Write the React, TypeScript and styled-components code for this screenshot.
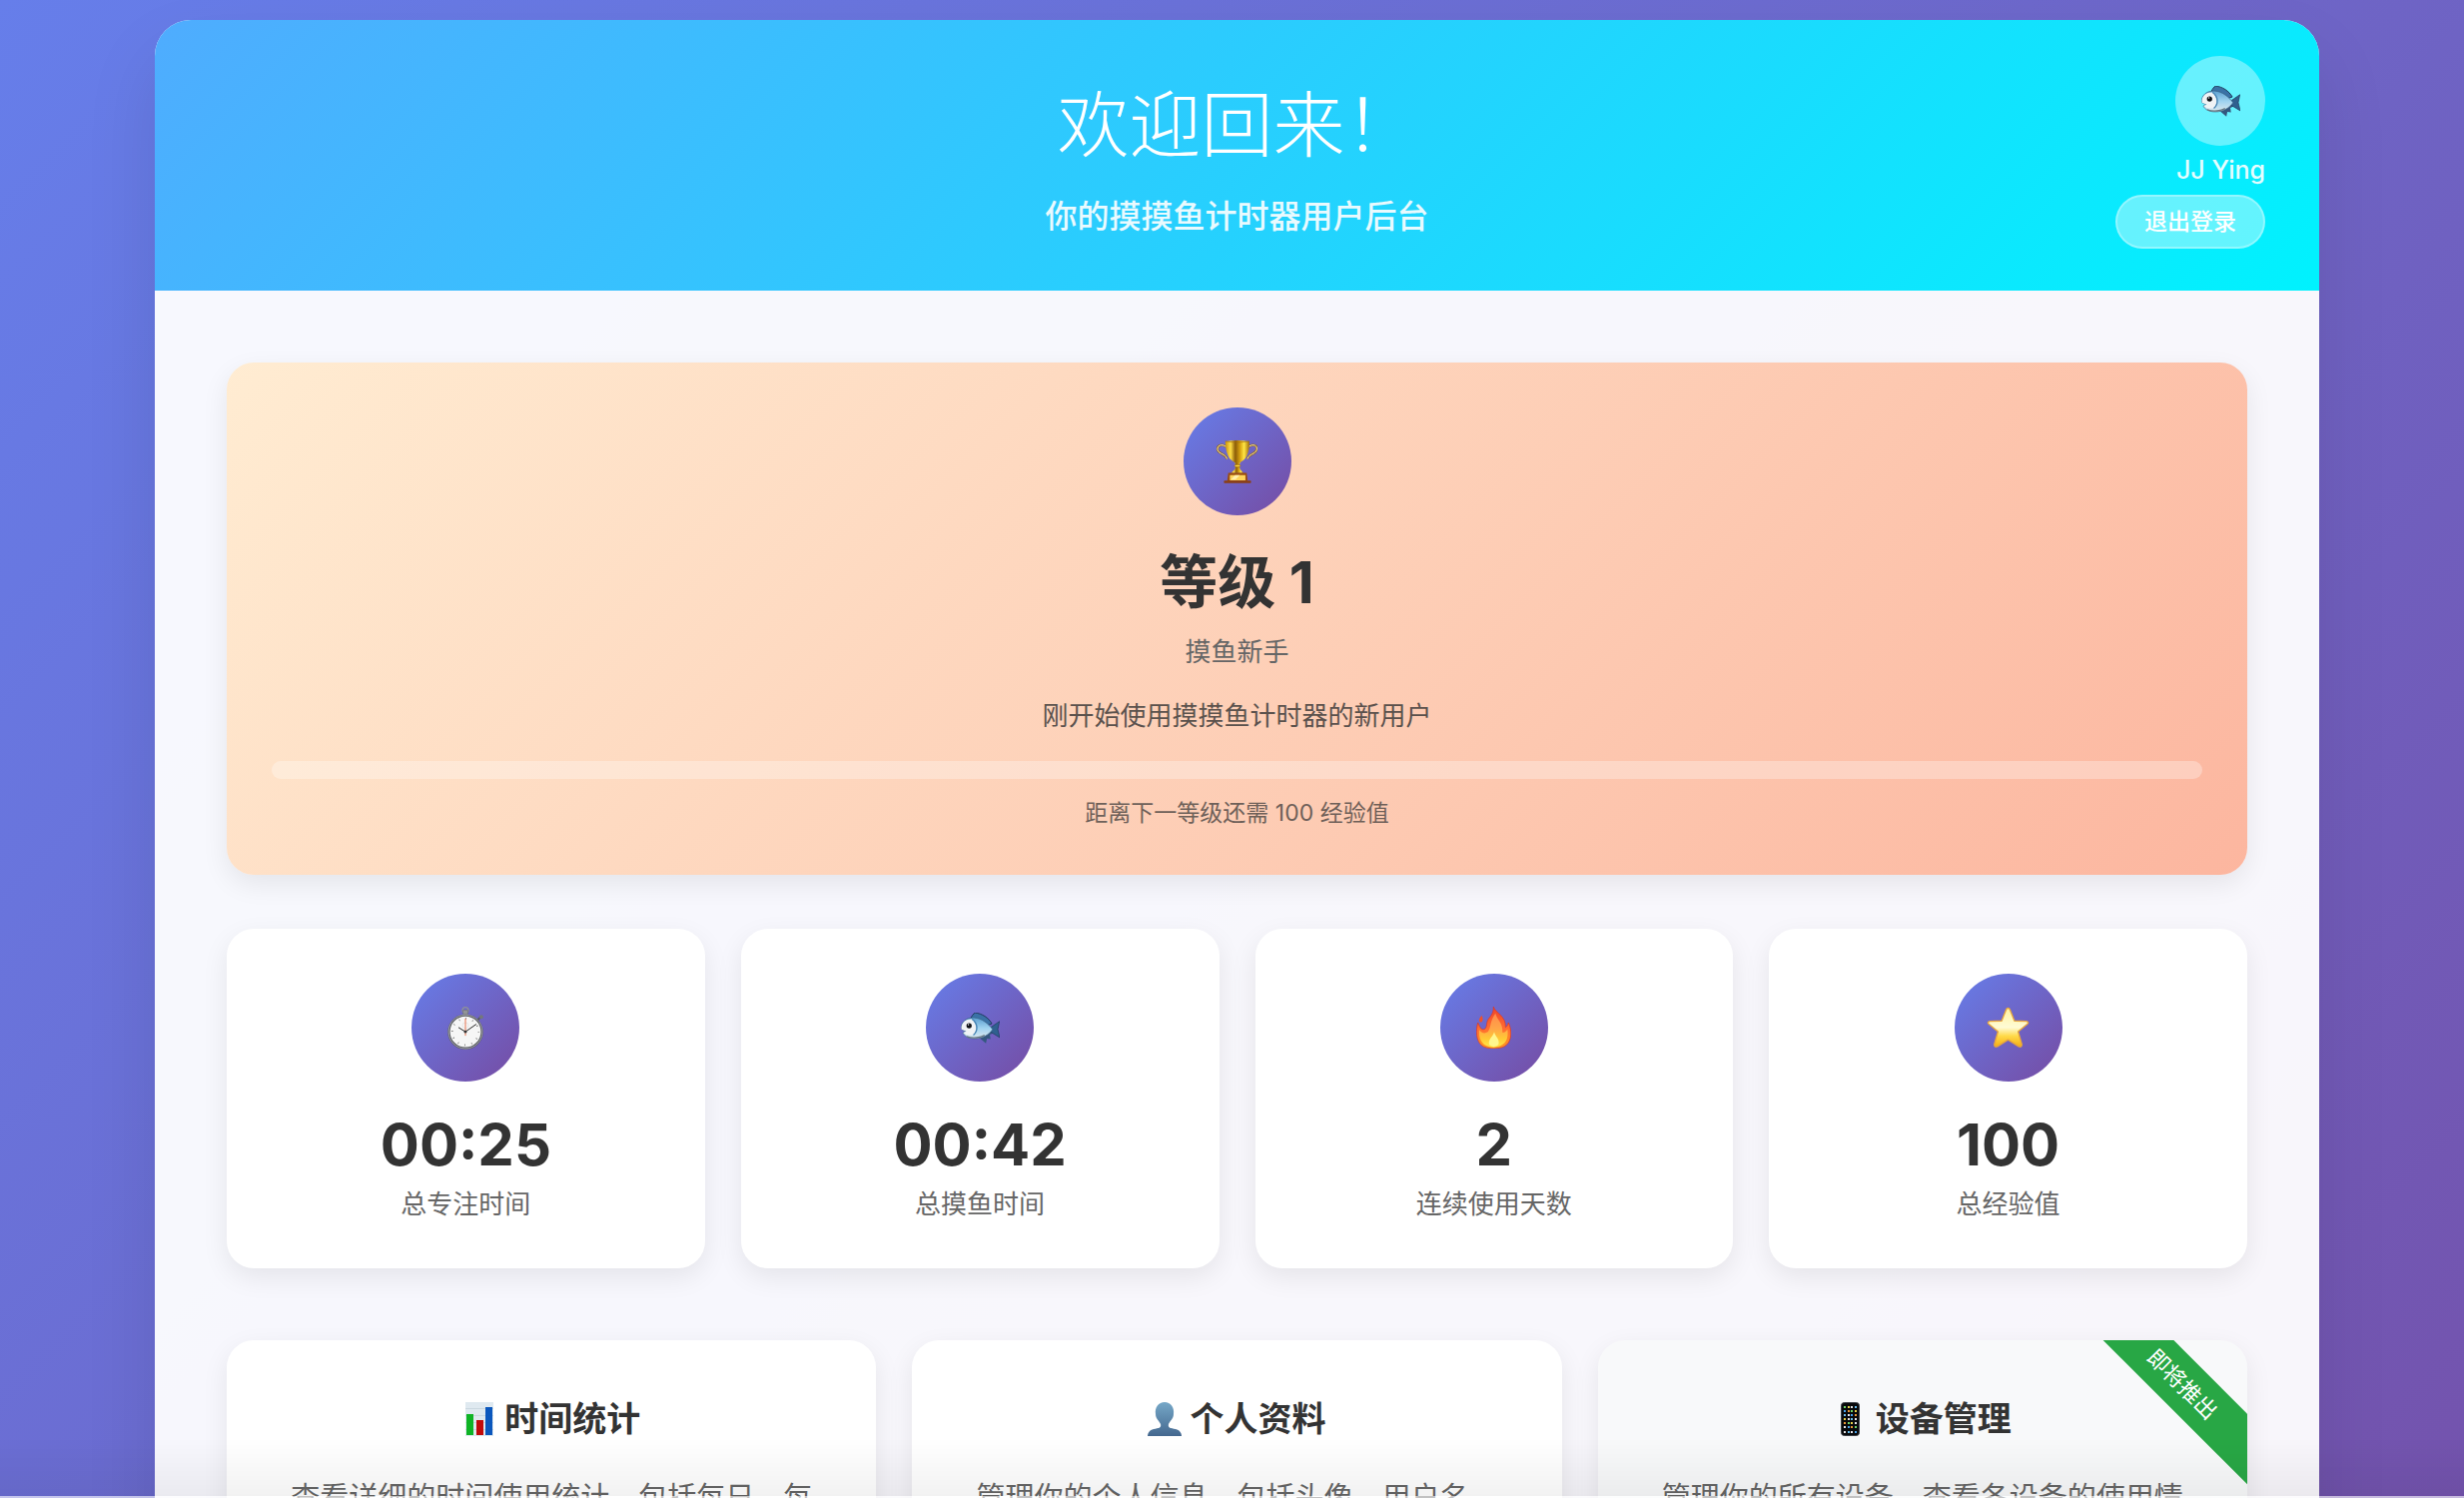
import React from "react";
import styled, { createGlobalStyle } from "styled-components";

const GlobalStyle = createGlobalStyle`
  * { box-sizing: border-box; margin: 0; padding: 0; }
  body {
    font-family: Inter, "Noto Sans CJK SC", sans-serif;
    color: #333;
  }
`;

const Page = styled.div`
  height: 100vh;
  overflow: hidden;
  padding: 20px 145px 0 155px;
  background: linear-gradient(135deg, #667eea 0%, #764ba2 100%) 0 0 / 100% 150vh no-repeat;
`;

const Container = styled.main`
  border-radius: 36px;
  overflow: hidden;
  background: rgba(255, 255, 255, 0.95);
  box-shadow: 0 36px 72px rgba(0, 0, 0, 0.1);
`;

const Header = styled.header`
  display: grid;
  grid-template-columns: 1fr auto 1fr;
  align-items: start;
  padding: 36px 54px;
  background: linear-gradient(135deg, #4facfe 0%, #00f2fe 100%);
  color: #fff;
`;

const Welcome = styled.div`
  grid-column: 2;
  display: flex;
  flex-direction: column;
  gap: 18px;
  padding: 19px 0 14px;
  text-align: center;
`;

const WelcomeTitle = styled.h1`
  font-size: 72px;
  line-height: 100px;
  font-weight: 200;
`;

const WelcomeText = styled.p`
  font-size: 32px;
  line-height: 48px;
  font-weight: 500;
  opacity: 0.9;
`;

const UserPanel = styled.div`
  display: flex;
  flex-direction: column;
  align-items: flex-end;
  gap: 9px;
`;

const Avatar = styled.div`
  display: grid;
  place-items: center;
  width: 90px;
  height: 90px;
  border-radius: 50%;
  background: rgba(255, 255, 255, 0.38);
`;

const UserName = styled.span`
  font-size: 25px;
  line-height: 31px;
  font-weight: 500;
  opacity: 0.9;
`;

const LogoutButton = styled.button`
  height: 54px;
  padding: 0 27px;
  border: 2px solid rgba(255, 255, 255, 0.3);
  border-radius: 27px;
  background: rgba(255, 255, 255, 0.38);
  color: #fff;
  font: inherit;
  font-size: 23px;
  line-height: 34px;
  font-weight: 500;
`;

const Content = styled.div`
  padding: 72px;
`;

const LevelCard = styled.section`
  display: flex;
  flex-direction: column;
  align-items: center;
  padding: 45px;
  margin-bottom: 54px;
  border-radius: 27px;
  background: linear-gradient(135deg, #ffecd2 0%, #fcb69f 100%);
  box-shadow: 0 9px 27px rgba(0, 0, 0, 0.08);
`;

const IconCircle = styled.div`
  display: grid;
  place-items: center;
  width: 108px;
  height: 108px;
  margin-bottom: 27px;
  border-radius: 50%;
  background: linear-gradient(135deg, #667eea 0%, #764ba2 100%);
`;

const LevelTitle = styled.h2`
  font-size: 58px;
  line-height: 80px;
  margin-bottom: 11px;
`;

const Label = styled.p`
  font-size: 26px;
  line-height: 38px;
  color: #666;
`;

const LevelDescription = styled.p`
  margin: 26px 0;
  font-size: 26px;
  line-height: 38px;
  opacity: 0.8;
`;

const LevelProgress = styled.div`
  width: 100%;
  height: 18px;
  margin-bottom: 17px;
  border-radius: 9px;
  background: rgba(255, 255, 255, 0.3);
`;

const LevelHint = styled.p`
  font-size: 23px;
  line-height: 34px;
  opacity: 0.7;
`;

const StatGrid = styled.section`
  display: grid;
  grid-template-columns: repeat(4, 1fr);
  gap: 36px;
  margin-bottom: 72px;
`;

const StatCard = styled.article`
  display: flex;
  flex-direction: column;
  align-items: center;
  padding: 45px;
  border-radius: 27px;
  background: #fff;
  box-shadow: 0 9px 27px rgba(0, 0, 0, 0.08);
`;

const StatValue = styled.p`
  font-size: 58px;
  line-height: 72px;
  font-weight: 700;
  margin-bottom: 5px;
`;

const FeatureGrid = styled.section`
  display: grid;
  grid-template-columns: repeat(3, 1fr);
  gap: 36px;
`;

const FeatureCard = styled.article<{ $muted?: boolean }>`
  position: relative;
  overflow: hidden;
  padding: 54px;
  border-radius: 27px;
  text-align: center;
  background: ${(p) => (p.$muted ? "#f8f9fa" : "#fff")};
  box-shadow: 0 9px 27px rgba(0, 0, 0, 0.08);
`;

const FeatureTitle = styled.h3`
  display: flex;
  justify-content: center;
  align-items: center;
  gap: 8px;
  margin-bottom: 27px;
  font-size: 34px;
  line-height: 50px;
  font-weight: 600;
`;

const TitleIcon = styled.span`
  display: grid;
  place-items: center;
  width: 34px;
  height: 34px;
`;

const FeatureText = styled.p`
  font-size: 29px;
  line-height: 54px;
  color: #666;
`;

const Ribbon = styled.span`
  position: absolute;
  top: 19px;
  right: -60px;
  width: 250px;
  height: 50px;
  background: #28a745;
  color: #fff;
  font-size: 22px;
  line-height: 50px;
  transform: rotate(45deg);
`;

const BottomFade = styled.div`
  position: fixed;
  left: 0;
  right: 0;
  bottom: 0;
  height: 60px;
  border-bottom: 2px solid rgba(255, 255, 255, 0.6);
  background: linear-gradient(rgba(0, 0, 0, 0), rgba(0, 0, 0, 0.05));
  pointer-events: none;
`;

const Fish = () => (
  <svg width="39" height="31" viewBox="0 0 118 93" aria-hidden="true">
    <defs>
      <linearGradient id="fishBody" x1="0" y1="0" x2="0" y2="1">
        <stop offset="0" stopColor="#5b9fd0" />
        <stop offset="0.5" stopColor="#9fd3f0" />
        <stop offset="1" stopColor="#dce9ee" />
      </linearGradient>
    </defs>
    <path d="M30 17 C34 8 38 3 43 0 C64 2 84 15 94 33 L80 38 Z" fill="#3a72a6" stroke="#1e3a5c" strokeWidth="3" />
    <path d="M52 72 L76 93 L79 78 L90 80 L88 66 L98 62 L88 52 Z" fill="#34587f" />
    <path d="M88 46 L117 26 L112 50 L118 75 L90 58 Z" fill="#2f608f" stroke="#1e3a5c" strokeWidth="2" />
    <path d="M1 42 C5 22 22 14 40 15 C64 16 84 34 96 50 C86 66 66 78 44 78 C24 79 10 70 6 60 L14 56 L2 50 Z" fill="url(#fishBody)" stroke="#365f82" strokeWidth="2" />
    <path d="M2 42 C5 27 16 18 34 19 C48 32 50 54 38 67 C24 70 13 66 7 60 L18 56 L2 50 Z" fill="#f0f3f5" />
    <path d="M34 19 C52 32 53 54 38 68" fill="none" stroke="#4582b2" strokeWidth="4" />
    <path d="M18 72 C38 79 60 75 72 68" fill="none" stroke="#647681" strokeWidth="4" />
    <circle cx="25" cy="39" r="8" fill="#0d1116" />
    <circle cx="23" cy="36" r="2" fill="#fff" />
  </svg>
);

const Trophy = () => (
  <svg width="41" height="43" viewBox="0 0 123 130" aria-hidden="true">
    <defs>
      <linearGradient id="gold" x1="0" x2="1">
        <stop offset="0" stopColor="#c9910b" />
        <stop offset="0.22" stopColor="#ffdf45" />
        <stop offset="0.42" stopColor="#8c5c07" />
        <stop offset="0.62" stopColor="#d9a411" />
        <stop offset="0.78" stopColor="#ffe544" />
        <stop offset="1" stopColor="#a06b08" />
      </linearGradient>
    </defs>
    <path d="M28 19 C14 8 0 17 3 29 C7 42 27 40 31 56" fill="none" stroke="#8c641f" strokeWidth="7" />
    <path d="M28 19 C14 8 0 17 3 29 C7 42 27 40 31 56" fill="none" stroke="#ffe8a6" strokeWidth="3" />
    <path d="M97 19 C111 8 125 17 121 29 C117 42 98 40 93 56" fill="none" stroke="#8c641f" strokeWidth="7" />
    <path d="M97 19 C111 8 125 17 121 29 C117 42 98 40 93 56" fill="none" stroke="#ffe8a6" strokeWidth="3" />
    <path d="M54 64 H72 L68 78 L71 88 L82 99 H43 L55 88 L58 78 Z" fill="url(#gold)" />
    <ellipse cx="63" cy="77" rx="9" ry="4" fill="#ffd63c" stroke="#8c5c07" strokeWidth="2" />
    <path d="M26 3 Q62 -3 99 3 C99 38 91 61 63 70 C34 61 28 38 26 3 Z" fill="url(#gold)" />
    <path d="M26 3 Q62 9 99 3" fill="none" stroke="#a36d0b" strokeWidth="2" />
    <path d="M35 98 H91 L94 123 H32 Z" fill="#9a4d12" />
    <rect x="40" y="105" width="47" height="16" fill="#ffd65b" />
    <path d="M43 119 L56 105 H70 L57 119 Z" fill="#fff0ae" />
    <rect x="22" y="122" width="82" height="7" rx="2" fill="#8b3f14" />
  </svg>
);

const Stopwatch = () => (
  <svg width="37" height="43" viewBox="0 0 111 130" aria-hidden="true">
    <circle cx="54" cy="11" r="9" fill="none" stroke="#8f9296" strokeWidth="4" />
    <rect x="46" y="9" width="16" height="16" rx="3" fill="#6d7176" />
    <path d="M51 11 V24 M57 11 V24" stroke="#d7d9dc" strokeWidth="2" />
    <path d="M90 42 L101 30" stroke="#55585d" strokeWidth="6" />
    <circle cx="102" cy="31" r="6" fill="#74777c" />
    <circle cx="54" cy="76" r="50" fill="#f6f6f6" stroke="#55585e" strokeWidth="7" />
    <circle cx="54" cy="76" r="51" fill="none" stroke="#c5c7ca" strokeWidth="2" />
    <circle cx="54" cy="76" r="40" fill="none" stroke="#555" strokeWidth="5" strokeDasharray="2 18.94" />
    <circle cx="54" cy="57" r="9" fill="none" stroke="#ddd" strokeWidth="2" />
    <path d="M54 76 L33 63 M54 76 L87 53" stroke="#222" strokeWidth="3" />
    <path d="M54 36 V88" stroke="#e8744f" strokeWidth="3" />
    <circle cx="54" cy="76" r="4" fill="#333" />
  </svg>
);

const Fire = () => (
  <svg width="35" height="42" viewBox="0 0 105 126" aria-hidden="true">
    <defs>
      <linearGradient id="flame" x1="0" y1="0" x2="0" y2="1">
        <stop offset="0" stopColor="#ed4429" />
        <stop offset="0.5" stopColor="#ff6a30" />
        <stop offset="1" stopColor="#ff9a22" />
      </linearGradient>
      <linearGradient id="flameCore" x1="0" y1="0" x2="0" y2="1">
        <stop offset="0" stopColor="#ff8a4a" />
        <stop offset="0.45" stopColor="#ffa648" />
        <stop offset="0.75" stopColor="#ffc935" />
        <stop offset="1" stopColor="#ffe94a" />
      </linearGradient>
    </defs>
    <path d="M52 0 C56 18 90 27 88 62 C93 60 94 55 97 48 C108 72 107 101 91 115 C78 129 31 129 16 116 C0 103 -2 72 5 48 C9 55 11 64 18 68 C28 70 31 62 32 50 C34 32 53 28 52 0 Z" fill="url(#flame)" stroke="#dd3524" strokeWidth="2" />
    <path d="M17 27 C21 35 21 43 15 47 C5 45 8 34 17 27 Z" fill="#ee512d" />
    <path d="M58 20 C62 40 80 46 79 78 C86 78 91 72 94 68 C98 98 88 119 53 122 C17 121 7 98 9 70 C16 80 26 82 35 76 C46 62 40 44 58 20 Z" fill="url(#flameCore)" />
    <path d="M54 76 C57 90 72 98 67 114 Q53 126 39 114 C35 98 51 90 54 76 Z" fill="#fff68e" />
  </svg>
);

const Star = () => (
  <svg width="43" height="42" viewBox="0 0 128 124" aria-hidden="true">
    <defs>
      <linearGradient id="star" x1="0" y1="0" x2="0" y2="1">
        <stop offset="0" stopColor="#fff3a0" />
        <stop offset="0.5" stopColor="#fffbd5" />
        <stop offset="0.72" stopColor="#ffda49" />
        <stop offset="1" stopColor="#f4ad13" />
      </linearGradient>
    </defs>
    <path d="M64 4 Q68 4 70 9 L83 42 L119 43 Q127 46 122 51 L94 74 L105 112 Q105 122 96 118 L64 98 L32 118 Q23 122 23 112 L34 74 L6 51 Q1 46 9 43 L45 42 L58 9 Q60 4 64 4 Z" fill="url(#star)" stroke="#e8a63f" strokeWidth="4" strokeLinejoin="round" />
  </svg>
);

const Chart = () => (
  <svg width="28" height="34" viewBox="0 0 28 34" aria-hidden="true">
    <rect width="28" height="34" fill="#dfe9f0" />
    <path d="M0 6.500H28M0 13.500H28M0 20.500H28M0 27.500H28" stroke="#cbd8e0" />
    <rect x="1" y="12" width="7" height="21" fill="#0eb425" />
    <rect x="11" y="18" width="7" height="15" fill="#c20a0a" />
    <rect x="20" y="5" width="7" height="28" fill="#0b57bd" />
  </svg>
);

const Person = () => (
  <svg width="34" height="34" viewBox="0 0 34 34" aria-hidden="true">
    <defs>
      <linearGradient id="person" x1="0" y1="0" x2="0" y2="1">
        <stop offset="0" stopColor="#76a8c8" />
        <stop offset="1" stopColor="#44688f" />
      </linearGradient>
    </defs>
    <path d="M17 0 C23 0 27 5 26 12 C26 17 22 19 21 22 C20 26 23 26 28 27 C32 28 34 31 34 34 H0 C0 31 2 28 6 27 C11 26 14 26 13 22 C12 19 8 17 8 12 C7 5 11 0 17 0 Z" fill="url(#person)" />
  </svg>
);

const appColors = ["#6fd96a", "#e8e8ee", "#e8d34a", "#4aa5ee", "#e5e5e5", "#ee9a38", "#6ac1f2"];

const Phone = () => (
  <svg width="19" height="34" viewBox="0 0 19 34" aria-hidden="true">
    <rect x="0.500" y="0.500" width="18" height="33" rx="3" fill="#08090b" stroke="#3c4146" />
    {[5, 9, 13, 17, 21, 25, 30].map((y, row) =>
      [4, 8, 11, 15].map((x, col) => (
        <rect key={`${x}-${y}`} x={x - 1} y={y - 1} width="2" height="2" fill={appColors[(row * 3 + col * 2) % 7]} />
      ))
    )}
  </svg>
);

const stats = [
  { icon: <Stopwatch />, value: "00:25", label: "总专注时间" },
  { icon: <Fish />, value: "00:42", label: "总摸鱼时间" },
  { icon: <Fire />, value: "2", label: "连续使用天数" },
  { icon: <Star />, value: "100", label: "总经验值" },
];

const features = [
  { icon: <Chart />, title: "时间统计", text: "查看详细的时间使用统计，包括每日、每周和每月的数据分析。" },
  { icon: <Person />, title: "个人资料", text: "管理你的个人信息，包括头像、用户名、邮箱等设置。" },
  { icon: <Phone />, title: "设备管理", text: "管理你的所有设备，查看各设备的使用情况。", soon: true },
];

export default function App() {
  return (
    <>
      <GlobalStyle />
      <Page>
        <Container>
          <Header>
            <Welcome>
              <WelcomeTitle>欢迎回来！</WelcomeTitle>
              <WelcomeText>你的摸摸鱼计时器用户后台</WelcomeText>
            </Welcome>
            <UserPanel>
              <Avatar><Fish /></Avatar>
              <UserName>JJ Ying</UserName>
              <LogoutButton type="button">退出登录</LogoutButton>
            </UserPanel>
          </Header>
          <Content>
            <LevelCard>
              <IconCircle><Trophy /></IconCircle>
              <LevelTitle>等级 1</LevelTitle>
              <Label>摸鱼新手</Label>
              <LevelDescription>刚开始使用摸摸鱼计时器的新用户</LevelDescription>
              <LevelProgress role="progressbar" aria-label="等级进度" aria-valuenow={0} />
              <LevelHint>距离下一等级还需 100 经验值</LevelHint>
            </LevelCard>
            <StatGrid>
              {stats.map((s) => (
                <StatCard key={s.label}>
                  <IconCircle>{s.icon}</IconCircle>
                  <StatValue>{s.value}</StatValue>
                  <Label>{s.label}</Label>
                </StatCard>
              ))}
            </StatGrid>
            <FeatureGrid>
              {features.map((f) => (
                <FeatureCard key={f.title} $muted={f.soon}>
                  <FeatureTitle>
                    <TitleIcon>{f.icon}</TitleIcon>
                    {f.title}
                  </FeatureTitle>
                  <FeatureText>{f.text}</FeatureText>
                  {f.soon && <Ribbon>即将推出</Ribbon>}
                </FeatureCard>
              ))}
            </FeatureGrid>
          </Content>
        </Container>
      </Page>
      <BottomFade />
    </>
  );
}
